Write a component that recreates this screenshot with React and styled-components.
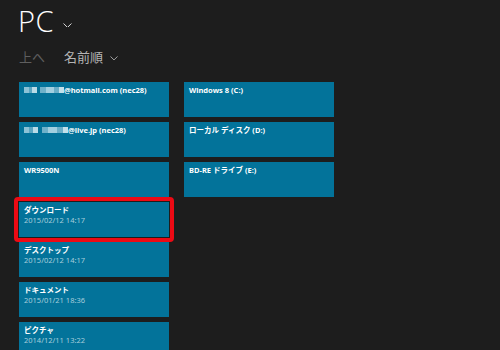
import React from 'react';
import styled, { createGlobalStyle } from 'styled-components';

const Global = createGlobalStyle`
  html, body {
    margin: 0;
    padding: 0;
    background: #1d1d1d;
  }
  body {
    font-family: "Noto Sans", "Noto Sans CJK JP", sans-serif;
    overflow: hidden;
  }
`;

const Page = styled.div`
  width: 500px;
  height: 350px;
  overflow: hidden;
  background: #1d1d1d;
  color: #fff;
`;

const TitleRow = styled.div`
  display: flex;
  align-items: center;
  gap: 9px;
  padding: 3px 0 0 18px;
  height: 36px;
`;

const Title = styled.h1`
  margin: 0;
  font-family: "Open Sans", "Noto Sans", sans-serif;
  font-size: 29px;
  line-height: 36px;
  font-weight: 300;
  letter-spacing: 0.5px;
`;

const SubRow = styled.div`
  display: flex;
  align-items: center;
  padding: 10px 0 0 19px;
  height: 16px;
  font-family: "Noto Sans CJK JP", sans-serif;
  font-size: 13px;
  line-height: 16px;
`;

const Back = styled.span`
  color: #5f5f5f;
  width: 45px;
`;

const Sort = styled.span`
  color: #b4b4b4;
  display: flex;
  align-items: center;
  gap: 7px;
`;

const Grid = styled.div`
  display: flex;
  gap: 15px;
  padding: 17px 0 0 19px;
`;

const Column = styled.div`
  display: flex;
  flex-direction: column;
  gap: 5px;
  width: 150px;
`;

const Tile = styled.div`
  position: relative;
  height: 35px;
  box-sizing: border-box;
  padding: 3px 5px 0;
  background: #03739a;
  flex-shrink: 0;

  ${(p) =>
    p.$selected &&
    `
    &::after {
      content: '';
      position: absolute;
      inset: -5px;
      border: 4px solid #ec0a14;
      border-radius: 4px;
    }
  `}
`;

const Name = styled.div`
  display: flex;
  align-items: center;
  font-family: "Noto Sans", "Noto Sans CJK JP", sans-serif;
  font-size: 7.5px;
  font-weight: 700;
  line-height: 10px;
  color: #fff;
  white-space: nowrap;
`;

const Date = styled.div`
  font-family: "Noto Sans", sans-serif;
  font-size: 7.5px;
  line-height: 10px;
  color: #a6cddb;
`;

const Mosaic = styled.span`
  display: inline-block;
  width: ${(p) => p.$w}px;
  height: 6px;
  margin-right: 0;
  background: linear-gradient(
    90deg,
    #8cc2d6 0 12%,
    #5aa6c2 12% 20%,
    #b9dbe7 20% 32%,
    #03739a 32% 40%,
    #6fb1ca 40% 55%,
    #a2cfe0 55% 75%,
    #6aaec8 75% 88%,
    #c3e0ea 88% 100%
  );
`;

const Chevron = ({ size = 9 }) => (
  <svg width={size} height={size * 0.55} viewBox="0 0 18 10" fill="none">
    <path d="M1 1 L9 9 L17 1" stroke="currentColor" strokeWidth="2" />
  </svg>
);

const ChevronWrap = styled.span`
  display: flex;
  color: ${(p) => p.$color};
  padding-top: ${(p) => p.$top || 0}px;
`;

const left = [
  { name: '@hotmail.com (nec28)', blur: 40 },
  { name: '@live.jp (nec28)', blur: 44 },
  { name: 'WR9500N' },
  { name: 'ダウンロード', date: '2015/02/12 14:17', selected: true },
  { name: 'デスクトップ', date: '2015/02/12 14:17' },
  { name: 'ドキュメント', date: '2015/01/21 18:36' },
  { name: 'ピクチャ', date: '2014/12/11 13:22' },
];

const right = [
  { name: 'Windows 8 (C:)' },
  { name: 'ローカル ディスク (D:)' },
  { name: 'BD-RE ドライブ (E:)' },
];

const Item = ({ item }) => (
  <Tile $selected={item.selected}>
    <Name>
      {item.blur && <Mosaic $w={item.blur} />}
      {item.name}
    </Name>
    {item.date && <Date>{item.date}</Date>}
  </Tile>
);

const App = () => {
  return (
    <Page>
      <Global />
      <TitleRow>
        <Title>PC</Title>
        <ChevronWrap $color="#e0e0e0" $top={8}>
          <Chevron size={9} />
        </ChevronWrap>
      </TitleRow>
      <SubRow>
        <Back>上へ</Back>
        <Sort>
          名前順
          <ChevronWrap $color="#b4b4b4" $top={2}>
            <Chevron size={8} />
          </ChevronWrap>
        </Sort>
      </SubRow>
      <Grid>
        <Column>
          {left.map((item, i) => (
            <Item key={i} item={item} />
          ))}
        </Column>
        <Column>
          {right.map((item, i) => (
            <Item key={i} item={item} />
          ))}
        </Column>
      </Grid>
    </Page>
  );
};

export default App;
